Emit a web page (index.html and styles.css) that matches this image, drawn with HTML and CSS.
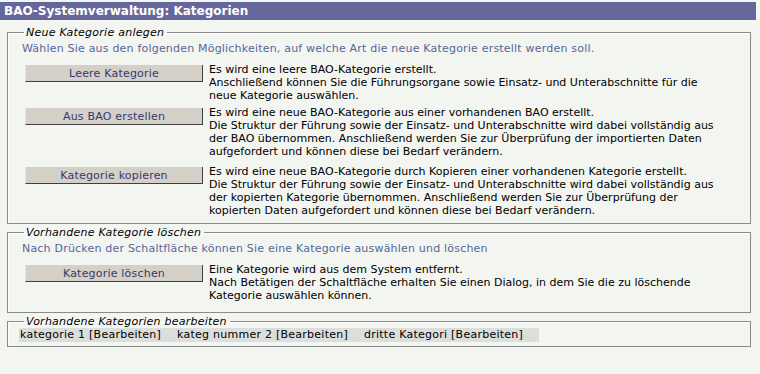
FILE: index.html
```html
<!DOCTYPE html>
<html>
<head>
  <meta charset="UTF-8">
  <title>BAO-Systemverwaltung: Kategorien</title>
  <link rel="stylesheet" href="styles.css">
</head>
<body>
  <div class="titlebar">BAO-Systemverwaltung: Kategorien</div>

  <fieldset class="group group-first">
    <legend>Neue Kategorie anlegen</legend>
    <p class="hint">Wählen Sie aus den folgenden Möglichkeiten, auf welche Art die neue Kategorie erstellt werden soll.</p>

    <div class="action-list">
      <div class="action">
        <button class="btn">Leere Kategorie</button>
        <div class="action-text">
          Es wird eine leere BAO-Kategorie erstellt.<br>
          Anschließend können Sie die Führungsorgane sowie Einsatz- und Unterabschnitte für die<br>
          neue Kategorie auswählen.
        </div>
      </div>
      <div class="action">
        <button class="btn">Aus BAO erstellen</button>
        <div class="action-text">
          Es wird eine neue BAO-Kategorie aus einer vorhandenen BAO erstellt.<br>
          Die Struktur der Führung sowie der Einsatz- und Unterabschnitte wird dabei vollständig aus<br>
          der BAO übernommen. Anschließend werden Sie zur Überprüfung der importierten Daten<br>
          aufgefordert und können diese bei Bedarf verändern.
        </div>
      </div>
      <div class="action action-spaced">
        <button class="btn">Kategorie kopieren</button>
        <div class="action-text">
          Es wird eine neue BAO-Kategorie durch Kopieren einer vorhandenen Kategorie erstellt.<br>
          Die Struktur der Führung sowie der Einsatz- und Unterabschnitte wird dabei vollständig aus<br>
          der kopierten Kategorie übernommen. Anschließend werden Sie zur Überprüfung der<br>
          kopierten Daten aufgefordert und können diese bei Bedarf verändern.
        </div>
      </div>
    </div>
  </fieldset>

  <fieldset class="group group-loose">
    <legend>Vorhandene Kategorie löschen</legend>
    <p class="hint">Nach Drücken der Schaltfläche können Sie eine Kategorie auswählen und löschen</p>

    <div class="action-list">
      <div class="action">
        <button class="btn">Kategorie löschen</button>
        <div class="action-text">
          Eine Kategorie wird aus dem System entfernt.<br>
          Nach Betätigen der Schaltfläche erhalten Sie einen Dialog, in dem Sie die zu löschende<br>
          Kategorie auswählen können.
        </div>
      </div>
    </div>
  </fieldset>

  <fieldset class="group group-compact">
    <legend>Vorhandene Kategorien bearbeiten</legend>
    <div class="category-list">
      <span class="category-item">kategorie 1 [Bearbeiten]</span>
      <span class="category-item">kateg nummer 2 [Bearbeiten]</span>
      <span class="category-item">dritte Kategori [Bearbeiten]</span>
    </div>
  </fieldset>
</body>
</html>
```

FILE: styles.css
```css
:root {
  --page-bg: #f3f5f1;
  --title-bg: #65679a;
  --hint-color: #55669a;
  --button-bg: #d4d0c8;
  --button-text: #35386f;
  --border-color: #8a8a8a;
  --item-bg: #dcdedb;
}

body {
  font-family: "DejaVu Sans", Verdana, sans-serif;
  font-size: 11px;
  line-height: 13px;
  margin: 0;
  padding-top: 2px;
  background-color: var(--page-bg);
  color: #000000;
}

.titlebar {
  margin-right: 4px;
  height: 18px;
  line-height: 18px;
  padding-left: 4px;
  background-color: var(--title-bg);
  color: #ffffff;
  font-size: 12px;
  font-weight: bold;
}

/* Rahmen der Bereiche */
.group {
  margin: 2px 9px 2px 7px;
  padding: 0 14px 6px 14px;
  border: 1px solid var(--border-color);
  box-shadow: inset 1px 1px 0 #ffffff;
}

.group-first {
  margin-top: 6px;
}

.group-loose {
  padding-bottom: 10px;
}

.group-compact {
  padding-bottom: 4px;
}

.group legend {
  margin-left: 2px;
  padding: 0 3px 0 2px;
  font-style: italic;
  letter-spacing: 0.25px;
}

.hint {
  margin: 3px 0 0 0;
  color: var(--hint-color);
  letter-spacing: 0.2px;
}

.action-list {
  display: flex;
  flex-direction: column;
  gap: 4px;
  margin-top: 8px;
}

.action {
  display: flex;
  gap: 6px;
}

.action-spaced {
  margin-top: 3px;
}

.btn {
  flex: 0 0 178px;
  height: 17px;
  margin: 2px 0 0 3px;
  padding: 0;
  font-family: inherit;
  font-size: 11px;
  line-height: 15px;
  letter-spacing: 0.2px;
  color: var(--button-text);
  background-color: var(--button-bg);
  border-style: solid;
  border-width: 0 1px 1px 1px;
  border-color: var(--button-bg) #404040 #404040 #e6e4df;
  cursor: pointer;
}

.action-text {
  white-space: nowrap;
}

.category-list {
  display: inline-flex;
  gap: 16px;
  margin-left: -3px;
  padding: 0 3px 0 1px;
  line-height: 14px;
  letter-spacing: 0.25px;
  background-color: var(--item-bg);
}

.category-item:last-child {
  padding-right: 13px;
}
```
